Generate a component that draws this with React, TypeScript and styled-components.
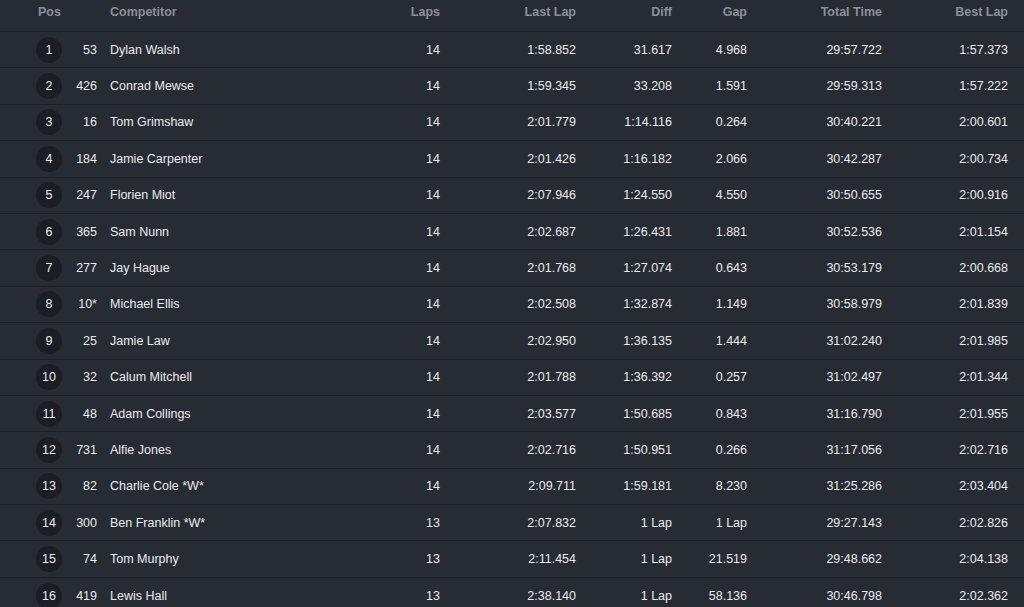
import * as React from "react"
import styled, { createGlobalStyle } from "styled-components"

const GlobalStyle = createGlobalStyle`
  html, body {
    margin: 0;
    padding: 0;
    background: #272b34;
  }
  body {
    font-family: "Liberation Sans", Arial, sans-serif;
  }
`

interface Result {
  pos: number
  no: string
  name: string
  laps: number
  last: string
  diff: string
  gap: string
  total: string
  best: string
}

const results: Result[] = [
  { pos: 1, no: "53", name: "Dylan Walsh", laps: 14, last: "1:58.852", diff: "31.617", gap: "4.968", total: "29:57.722", best: "1:57.373" },
  { pos: 2, no: "426", name: "Conrad Mewse", laps: 14, last: "1:59.345", diff: "33.208", gap: "1.591", total: "29:59.313", best: "1:57.222" },
  { pos: 3, no: "16", name: "Tom Grimshaw", laps: 14, last: "2:01.779", diff: "1:14.116", gap: "0.264", total: "30:40.221", best: "2:00.601" },
  { pos: 4, no: "184", name: "Jamie Carpenter", laps: 14, last: "2:01.426", diff: "1:16.182", gap: "2.066", total: "30:42.287", best: "2:00.734" },
  { pos: 5, no: "247", name: "Florien Miot", laps: 14, last: "2:07.946", diff: "1:24.550", gap: "4.550", total: "30:50.655", best: "2:00.916" },
  { pos: 6, no: "365", name: "Sam Nunn", laps: 14, last: "2:02.687", diff: "1:26.431", gap: "1.881", total: "30:52.536", best: "2:01.154" },
  { pos: 7, no: "277", name: "Jay Hague", laps: 14, last: "2:01.768", diff: "1:27.074", gap: "0.643", total: "30:53.179", best: "2:00.668" },
  { pos: 8, no: "10*", name: "Michael Ellis", laps: 14, last: "2:02.508", diff: "1:32.874", gap: "1.149", total: "30:58.979", best: "2:01.839" },
  { pos: 9, no: "25", name: "Jamie Law", laps: 14, last: "2:02.950", diff: "1:36.135", gap: "1.444", total: "31:02.240", best: "2:01.985" },
  { pos: 10, no: "32", name: "Calum Mitchell", laps: 14, last: "2:01.788", diff: "1:36.392", gap: "0.257", total: "31:02.497", best: "2:01.344" },
  { pos: 11, no: "48", name: "Adam Collings", laps: 14, last: "2:03.577", diff: "1:50.685", gap: "0.843", total: "31:16.790", best: "2:01.955" },
  { pos: 12, no: "731", name: "Alfie Jones", laps: 14, last: "2:02.716", diff: "1:50.951", gap: "0.266", total: "31:17.056", best: "2:02.716" },
  { pos: 13, no: "82", name: "Charlie Cole *W*", laps: 14, last: "2:09.711", diff: "1:59.181", gap: "8.230", total: "31:25.286", best: "2:03.404" },
  { pos: 14, no: "300", name: "Ben Franklin *W*", laps: 13, last: "2:07.832", diff: "1 Lap", gap: "1 Lap", total: "29:27.143", best: "2:02.826" },
  { pos: 15, no: "74", name: "Tom Murphy", laps: 13, last: "2:11.454", diff: "1 Lap", gap: "21.519", total: "29:48.662", best: "2:04.138" },
  { pos: 16, no: "419", name: "Lewis Hall", laps: 13, last: "2:38.140", diff: "1 Lap", gap: "58.136", total: "30:46.798", best: "2:02.362" },
]

// column right edges: 62 / 97 / 380 / 440 / 576 / 672 / 747 / 882 / 1008
const columns = "62px 35px 283px 60px 136px 96px 75px 135px 126px"

const Board = styled.div`
  width: 1024px;
  background: #272b34;
  font-size: 12.5px;
`

const HeaderRow = styled.div`
  display: grid;
  grid-template-columns: ${columns};
  align-items: center;
  height: 32px;
  padding-bottom: 7px;
  box-sizing: border-box;
  border-bottom: 1px solid #1d2027;
  color: #8b9099;
  font-weight: bold;
`

const Row = styled.div`
  display: grid;
  grid-template-columns: ${columns};
  align-items: center;
  height: 36.4px;
  box-sizing: border-box;
  border-bottom: 1px solid #1d2027;
  color: #ebecee;
`

const Cell = styled.div<{ $align?: "left" | "right" | "center" }>`
  text-align: ${(p) => p.$align ?? "right"};
  white-space: nowrap;
`

const NameCell = styled(Cell)`
  padding-left: 13px;
`

const PosHead = styled.div`
  justify-self: end;
  width: 28px;
  padding-left: 3px;
  box-sizing: border-box;
  text-align: center;
`

const PosBadge = styled.div`
  justify-self: end;
  width: 26px;
  height: 26px;
  border-radius: 50%;
  background: #1b1e25;
  display: flex;
  align-items: center;
  justify-content: center;
`

export default function App() {
  return (
    <>
      <GlobalStyle />
      <Board>
        <HeaderRow>
          <PosHead>Pos</PosHead>
          <Cell />
          <NameCell $align="left">Competitor</NameCell>
          <Cell>Laps</Cell>
          <Cell>Last Lap</Cell>
          <Cell>Diff</Cell>
          <Cell>Gap</Cell>
          <Cell>Total Time</Cell>
          <Cell>Best Lap</Cell>
        </HeaderRow>
        {results.map((r) => (
          <Row key={r.pos}>
            <PosBadge>{r.pos}</PosBadge>
            <Cell>{r.no}</Cell>
            <NameCell $align="left">{r.name}</NameCell>
            <Cell>{r.laps}</Cell>
            <Cell>{r.last}</Cell>
            <Cell>{r.diff}</Cell>
            <Cell>{r.gap}</Cell>
            <Cell>{r.total}</Cell>
            <Cell>{r.best}</Cell>
          </Row>
        ))}
      </Board>
    </>
  )
}
